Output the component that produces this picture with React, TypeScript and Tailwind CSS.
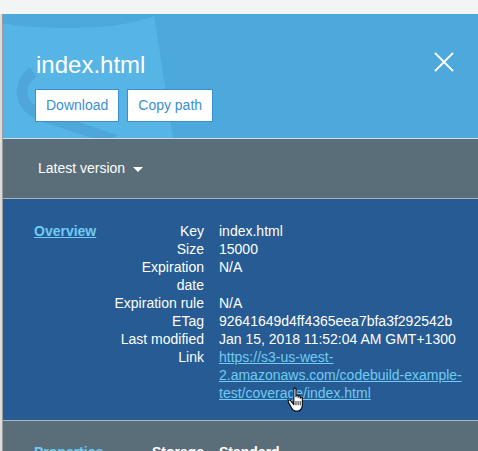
import React from 'react';

const LINK = 'https://s3-us-west-2.amazonaws.com/codebuild-example-test/coverage/index.html';

const overview: [string, React.ReactNode][] = [
  ['Key', 'index.html'],
  ['Size', '15000'],
  ['Expiration date', 'N/A'],
  ['Expiration rule', 'N/A'],
  ['ETag', '92641649d4ff4365eea7bfa3f292542b'],
  ['Last modified', 'Jan 15, 2018 11:52:04 AM GMT+1300'],
  [
    'Link',
    <a href="#" className="text-[#6fcbf3] underline">
      {LINK}
    </a>,
  ],
];

const properties: [string, string][] = [
  ['Storage', 'Standard'],
  ['Encryption', 'None'],
  ['Metadata', '1'],
];

const BucketArt = () => (
  <svg className="absolute left-0 top-0 pointer-events-none" width="200" height="124" viewBox="0 0 200 124">
    <polygon points="0,0 151,0 170,124 0,124" fill="#56b5e4" />
    <ellipse cx="62" cy="-6" rx="96" ry="20" fill="#4da8db" />
    <path d="M30 58 C14 70 14 92 40 102 L112 126" fill="none" stroke="#4ea6d9" strokeWidth="11" />
  </svg>
);

const HandCursor = () => (
  <svg className="absolute left-[284px] top-[188px] pointer-events-none" width="19" height="26" viewBox="0 0 18 24">
    <path
      d="M6.5 1.5C6.5 0.9 7 0.5 7.5 0.5C8 0.5 8.5 0.9 8.5 1.5L8.5 9L8.5 8.3C8.5 7.7 9 7.3 9.5 7.3C10 7.3 10.5 7.7 10.5 8.3L10.5 9.5L10.5 9C10.5 8.4 11 8 11.5 8C12 8 12.5 8.4 12.5 9L12.5 10.3C12.5 9.7 13 9.3 13.5 9.3C14 9.3 14.5 9.7 14.5 10.3L14.5 16.5C14.5 19.5 12.8 22.5 10 22.5L8.5 22.5C6.5 22.5 5.3 21.3 4.3 19.5L1.3 14C0.9 13.3 1.2 12.5 1.8 12.2C2.5 11.9 3.2 12.2 3.6 12.8L6.5 16.5Z"
      fill="#fff"
      stroke="#000"
      strokeWidth="1"
      strokeLinejoin="round"
    />
    <path d="M8.5 13V17M10.5 13V17M12.5 13V17" stroke="#000" strokeWidth="0.8" />
  </svg>
);

export default function App() {
  return (
    <div
      className="h-[451px] overflow-hidden bg-[#f3f4f4] pt-[14px] flex"
      style={{ fontFamily: '"Liberation Sans", Arial, sans-serif' }}
    >
      <div className="w-[3px] shrink-0 bg-[#dcdcdc] border-r border-[#9c9c9c]" />
      <div className="flex-1 flex flex-col">
        {/* header */}
        <div className="relative shrink-0 bg-[#4da8db] h-[125px] border-b border-[#cfdde6] overflow-hidden">
          <BucketArt />
          <div className="relative pl-[33px] pr-[24px] pt-[37px]">
            <div className="flex items-center justify-between">
              <h1 className="text-[24px] leading-[28px] text-white">index.html</h1>
              <svg width="20" height="20" viewBox="0 0 20 20" className="-mt-[6px]">
                <path d="M1 1L19 19M19 1L1 19" stroke="#fff" strokeWidth="1.8" />
              </svg>
            </div>
            <div className="flex gap-[8px] mt-[10px] -ml-[1px]">
              <button className="h-[33px] px-[10px] bg-white border border-[#3b8fd0] text-[#3b8fd3] text-[14px]">
                Download
              </button>
              <button className="h-[33px] px-[10px] bg-white border border-[#3b8fd0] text-[#3b8fd3] text-[14px]">
                Copy path
              </button>
            </div>
          </div>
        </div>

        {/* version bar */}
        <div className="shrink-0 bg-[#5a6e7a] h-[60px] border-b border-[#a8b3b9] flex items-center pl-[35px]">
          <span className="text-white text-[14px]">Latest version</span>
          <svg width="10" height="5" viewBox="0 0 10 5" className="ml-[8px] mt-[1px]">
            <polygon points="0,0 10,0 5,5" fill="#fff" />
          </svg>
        </div>

        {/* overview */}
        <div className="relative shrink-0 bg-[#265b93] border-b border-[#a9b8c4] pl-[31px] pr-[11px] pt-[23px] pb-[18px] flex text-[14px] leading-[18px]">
          <a href="#" className="w-[80px] shrink-0 font-bold text-[#6fcbf3] underline self-start">
            Overview
          </a>
          <div className="flex-1 grid grid-cols-[90px_1fr] gap-x-[15px] text-white">
            {overview.map(([k, v]) => (
              <React.Fragment key={k}>
                <div className="text-right">{k}</div>
                <div>{v}</div>
              </React.Fragment>
            ))}
          </div>
          <HandCursor />
        </div>

        {/* properties */}
        <div className="shrink-0 bg-[#5a6e7a] pl-[31px] pr-[11px] pt-[22px] pb-[18px] flex text-[14px] leading-[18px]">
          <a href="#" className="w-[80px] shrink-0 font-bold text-[#6fcbf3] underline self-start">
            Properties
          </a>
          <div className="flex-1 grid grid-cols-[90px_1fr] gap-x-[15px] text-white font-bold">
            {properties.map(([k, v]) => (
              <React.Fragment key={k}>
                <div className="text-right">{k}</div>
                <div>{v}</div>
              </React.Fragment>
            ))}
          </div>
        </div>
      </div>
    </div>
  );
}
